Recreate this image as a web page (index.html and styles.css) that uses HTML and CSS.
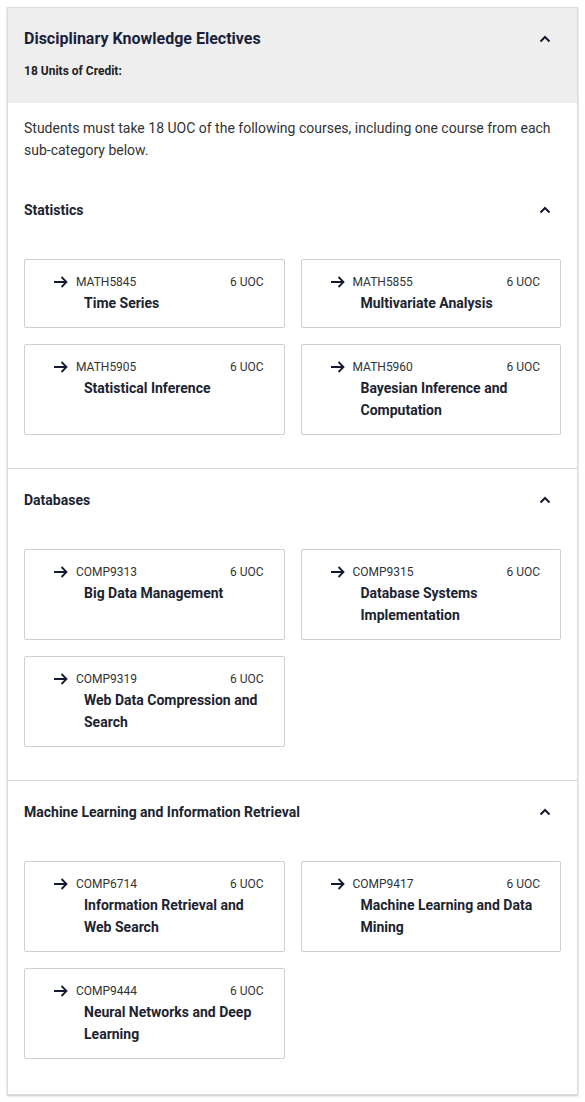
FILE: index.html
```html
<!DOCTYPE html>
<html>
<head>
<meta charset="utf-8">
<link rel="stylesheet" href="styles.css">
</head>
<body>
<div class="panel">
  <div class="panel-head">
    <div class="head-row">
      <h2 class="title">Disciplinary Knowledge Electives</h2>
      <svg class="chev" viewBox="0 0 12 8" width="12" height="8"><path d="M1.5 6.5 L6 2 L10.5 6.5" fill="none" stroke="#151a33" stroke-width="2"/></svg>
    </div>
    <div class="credit">18 Units of Credit:</div>
  </div>
  <div class="panel-body">
    <p class="desc">Students must take 18 UOC of the following courses, including one course from each sub-category below.</p>

    <section class="group first">
      <div class="group-head">
        <h3>Statistics</h3>
        <svg class="chev" viewBox="0 0 12 8" width="12" height="8"><path d="M1.5 6.5 L6 2 L10.5 6.5" fill="none" stroke="#151a33" stroke-width="2"/></svg>
      </div>
      <div class="grid">
        <a class="course"><div class="meta"><svg class="arrow" viewBox="0 0 14 12" width="14" height="12"><path d="M0 6 H12.5 M7.5 1 L12.5 6 L7.5 11" fill="none" stroke="#151a33" stroke-width="1.8"/></svg><span class="code">MATH5845</span><span class="uoc">6 UOC</span></div><div class="name">Time Series</div></a>
        <a class="course"><div class="meta"><svg class="arrow" viewBox="0 0 14 12" width="14" height="12"><path d="M0 6 H12.5 M7.5 1 L12.5 6 L7.5 11" fill="none" stroke="#151a33" stroke-width="1.8"/></svg><span class="code">MATH5855</span><span class="uoc">6 UOC</span></div><div class="name">Multivariate Analysis</div></a>
        <a class="course"><div class="meta"><svg class="arrow" viewBox="0 0 14 12" width="14" height="12"><path d="M0 6 H12.5 M7.5 1 L12.5 6 L7.5 11" fill="none" stroke="#151a33" stroke-width="1.8"/></svg><span class="code">MATH5905</span><span class="uoc">6 UOC</span></div><div class="name">Statistical Inference</div></a>
        <a class="course"><div class="meta"><svg class="arrow" viewBox="0 0 14 12" width="14" height="12"><path d="M0 6 H12.5 M7.5 1 L12.5 6 L7.5 11" fill="none" stroke="#151a33" stroke-width="1.8"/></svg><span class="code">MATH5960</span><span class="uoc">6 UOC</span></div><div class="name">Bayesian Inference and Computation</div></a>
      </div>
    </section>

    <section class="group">
      <div class="group-head">
        <h3>Databases</h3>
        <svg class="chev" viewBox="0 0 12 8" width="12" height="8"><path d="M1.5 6.5 L6 2 L10.5 6.5" fill="none" stroke="#151a33" stroke-width="2"/></svg>
      </div>
      <div class="grid">
        <a class="course"><div class="meta"><svg class="arrow" viewBox="0 0 14 12" width="14" height="12"><path d="M0 6 H12.5 M7.5 1 L12.5 6 L7.5 11" fill="none" stroke="#151a33" stroke-width="1.8"/></svg><span class="code">COMP9313</span><span class="uoc">6 UOC</span></div><div class="name">Big Data Management</div></a>
        <a class="course"><div class="meta"><svg class="arrow" viewBox="0 0 14 12" width="14" height="12"><path d="M0 6 H12.5 M7.5 1 L12.5 6 L7.5 11" fill="none" stroke="#151a33" stroke-width="1.8"/></svg><span class="code">COMP9315</span><span class="uoc">6 UOC</span></div><div class="name">Database Systems Implementation</div></a>
        <a class="course"><div class="meta"><svg class="arrow" viewBox="0 0 14 12" width="14" height="12"><path d="M0 6 H12.5 M7.5 1 L12.5 6 L7.5 11" fill="none" stroke="#151a33" stroke-width="1.8"/></svg><span class="code">COMP9319</span><span class="uoc">6 UOC</span></div><div class="name">Web Data Compression and Search</div></a>
      </div>
    </section>

    <section class="group">
      <div class="group-head">
        <h3>Machine Learning and Information Retrieval</h3>
        <svg class="chev" viewBox="0 0 12 8" width="12" height="8"><path d="M1.5 6.5 L6 2 L10.5 6.5" fill="none" stroke="#151a33" stroke-width="2"/></svg>
      </div>
      <div class="grid">
        <a class="course"><div class="meta"><svg class="arrow" viewBox="0 0 14 12" width="14" height="12"><path d="M0 6 H12.5 M7.5 1 L12.5 6 L7.5 11" fill="none" stroke="#151a33" stroke-width="1.8"/></svg><span class="code">COMP6714</span><span class="uoc">6 UOC</span></div><div class="name">Information Retrieval and Web Search</div></a>
        <a class="course"><div class="meta"><svg class="arrow" viewBox="0 0 14 12" width="14" height="12"><path d="M0 6 H12.5 M7.5 1 L12.5 6 L7.5 11" fill="none" stroke="#151a33" stroke-width="1.8"/></svg><span class="code">COMP9417</span><span class="uoc">6 UOC</span></div><div class="name">Machine Learning and Data Mining</div></a>
        <a class="course"><div class="meta"><svg class="arrow" viewBox="0 0 14 12" width="14" height="12"><path d="M0 6 H12.5 M7.5 1 L12.5 6 L7.5 11" fill="none" stroke="#151a33" stroke-width="1.8"/></svg><span class="code">COMP9444</span><span class="uoc">6 UOC</span></div><div class="name">Neural Networks and Deep Learning</div></a>
      </div>
    </section>
  </div>
</div>
</body>
</html>
```

FILE: styles.css
```css
* { box-sizing: border-box; }
html, body { margin: 0; padding: 0; background: #fff; }
body {
  padding: 7px 7px 6px 7px;
  font-family: Roboto, "Liberation Sans", sans-serif;
  color: #222;
}
.panel {
  border: 1px solid #dcdcdc;
  box-shadow: 0 1px 2px rgba(0,0,0,0.25);
  background: #fff;
}
.panel-head {
  background: #eeeeee;
  padding: 19px 16px 24px 16px;
}
.head-row {
  display: flex;
  align-items: center;
  justify-content: space-between;
  height: 24px;
}
.title {
  margin: 0;
  font-size: 16px;
  font-weight: 700;
  color: #1b1f3a;
  line-height: 24px;
}
.chev { margin-right: 10px; display: block; }
.credit {
  margin-top: 12px;
  font-size: 12px;
  font-weight: 700;
  color: #222;
  line-height: 16px;
}
.panel-body { padding: 0; }
.desc {
  margin: 0;
  padding: 14px 16px 0 16px;
  font-size: 14px;
  line-height: 22px;
  color: #333;
}
.group {
  border-top: 1px solid #d6d6d6;
  padding: 19px 16px 33px 16px;
}
.group.first {
  border-top: none;
  padding-top: 37px;
}
.group:last-child { padding-bottom: 35px; }
.group-head {
  display: flex;
  align-items: center;
  justify-content: space-between;
  height: 24px;
}
.group-head h3 {
  margin: 0;
  font-size: 14px;
  font-weight: 700;
  color: #1c2330;
  line-height: 24px;
}
.grid {
  margin-top: 37px;
  display: grid;
  grid-template-columns: 1fr 1fr;
  gap: 16px 16px;
}
.course {
  display: block;
  border: 1px solid #cfcfcf;
  border-radius: 2px;
  padding: 12px 20px 13px 29px;
  background: #fff;
}
.meta {
  display: flex;
  align-items: center;
  height: 20px;
}
.arrow { display: block; flex: none; margin-right: 8px; }
.code {
  font-size: 12px;
  color: #333;
  flex: 1;
}
.uoc {
  font-size: 12px;
  color: #333;
}
.name {
  margin-left: 30px;
  font-size: 14px;
  font-weight: 700;
  line-height: 22px;
  color: #1c2330;
}
```
